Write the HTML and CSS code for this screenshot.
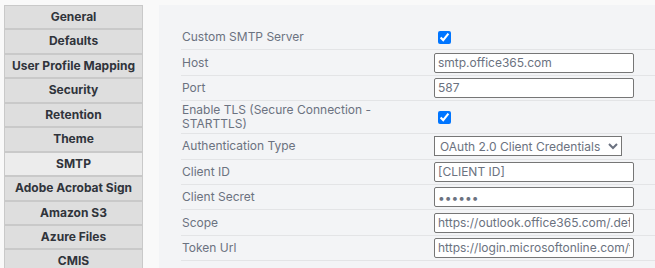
FILE: index.html
```html
<!DOCTYPE html>
<html>
<head>
<meta charset="utf-8">
<link rel="stylesheet" href="styles.css">
</head>
<body>
<div class="layout">
  <nav class="nav">
    <div class="nav-item">General</div>
    <div class="nav-item">Defaults</div>
    <div class="nav-item">User Profile Mapping</div>
    <div class="nav-item">Security</div>
    <div class="nav-item">Retention</div>
    <div class="nav-item">Theme</div>
    <div class="nav-item active">SMTP</div>
    <div class="nav-item">Adobe Acrobat Sign</div>
    <div class="nav-item">Amazon S3</div>
    <div class="nav-item">Azure Files</div>
    <div class="nav-item">CMIS</div>
  </nav>
  <main class="main">
    <table class="form">
      <tr><td class="label">Custom SMTP Server</td><td class="value"><input type="checkbox" checked></td></tr>
      <tr><td class="label">Host</td><td class="value"><input class="text" type="text" value="smtp.office365.com"></td></tr>
      <tr><td class="label">Port</td><td class="value"><input class="text" type="text" value="587"></td></tr>
      <tr><td class="label">Enable TLS (Secure Connection -<br>STARTTLS)</td><td class="value"><input type="checkbox" checked></td></tr>
      <tr><td class="label">Authentication Type</td><td class="value"><select class="sel"><option>OAuth 2.0 Client Credentials</option></select></td></tr>
      <tr><td class="label">Client ID</td><td class="value"><input class="text" type="text" value="[CLIENT ID]"></td></tr>
      <tr><td class="label">Client Secret</td><td class="value"><input class="text" type="password" value="secret"></td></tr>
      <tr><td class="label">Scope</td><td class="value"><input class="text" type="text" value="https://outlook.office365.com/.default"></td></tr>
      <tr><td class="label">Token Url</td><td class="value"><input class="text" type="text" value="https://login.microsoftonline.com/tenant/oauth2/v2.0/token"></td></tr>
    </table>
  </main>
</div>
</body>
</html>
```

FILE: styles.css
```css
html, body {
  margin: 0;
  padding: 0;
  background: #f9f9f9;
  font-family: Inter, "Noto Sans", sans-serif;
}
.layout {
  display: flex;
  align-items: flex-start;
  gap: 16px;
  padding: 5px 0 0 4px;
  height: 263px;
  overflow: hidden;
}
.nav {
  width: 139px;
  flex: none;
  display: flex;
  flex-direction: column;
}
.nav-item {
  box-sizing: border-box;
  height: 24.45px;
  border: 1px solid #c9c9c9;
  background: #dedede;
  color: #30343b;
  font-size: 12px;
  font-weight: 700;
  text-align: center;
  line-height: 22px;
  white-space: nowrap;
}
.nav-item.active {
  background: #ececec;
}
.main {
  flex: 1;
  background: #f3f4f6;
  height: 300px;
  padding: 20px 0 0 22px;
}
.form {
  border-collapse: separate;
  border-spacing: 0;
  width: 500px;
}
.form td {
  border-bottom: 1px solid #e3e4e6;
  font-size: 12px;
  color: #6b7280;
  vertical-align: middle;
  padding: 2px 0;
  height: 20.4px;
}
.label {
  width: 248px;
  padding-left: 1px !important;
  line-height: 14px;
}
.value {
  padding-left: 4px !important;
}
.form input[type=checkbox] {
  margin: 3px 3px 3px 4px;
  width: 13px;
  height: 13px;
  vertical-align: middle;
}
.text {
  box-sizing: border-box;
  width: 200px;
  height: 20px;
  margin: 0;
  border: 1px solid #767676;
  border-radius: 2px;
  padding: 1px 3px;
  font-family: Inter, "Noto Sans", sans-serif;
  font-size: 12px;
  color: #6b7280;
  background: #fff;
  display: block;
}
.sel {
  box-sizing: border-box;
  width: 188px;
  height: 20px;
  margin: 0;
  border: 1px solid #767676;
  border-radius: 0;
  font-family: Inter, "Noto Sans", sans-serif;
  font-size: 12px;
  color: #6b7280;
  background: #fff;
  display: block;
  padding: 0 0 0 1px;
}
```
